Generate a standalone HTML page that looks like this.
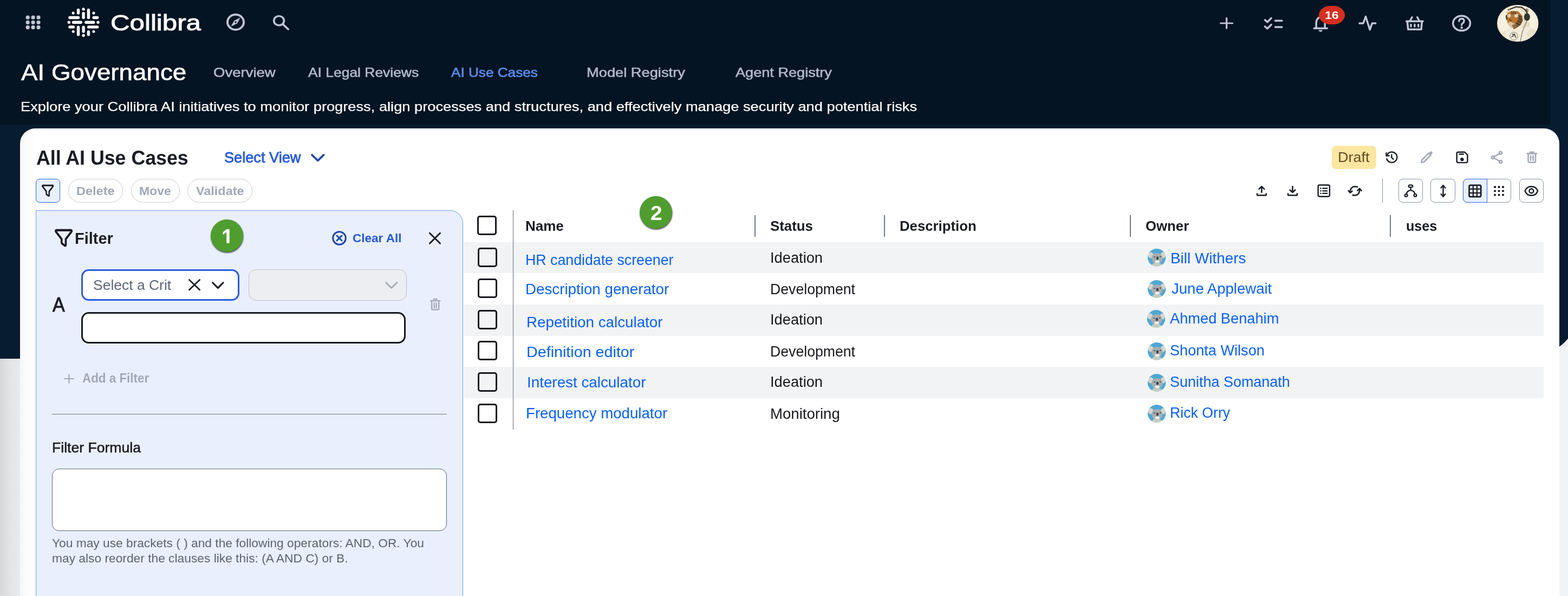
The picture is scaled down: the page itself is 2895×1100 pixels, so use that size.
<!DOCTYPE html>
<html lang="en"><head><meta charset="utf-8"><title>AI Governance - All AI Use Cases</title>
<style>
html,body{margin:0;padding:0;}
body{width:2895px;height:1100px;overflow:hidden;background:#071c30;font-family:"Liberation Sans",sans-serif;}
#root{position:relative;width:2895px;height:1100px;overflow:hidden;}
#root div,#root svg,#root span{position:absolute;box-sizing:border-box;}
#root svg{overflow:visible;}
.t{white-space:nowrap;transform-origin:0 0;display:block;}

</style></head>
<body>
<div id="root">
<div style="left:0.00px;top:0.00px;width:2863.00px;height:230.00px;background:#051422;"></div>
<div style="left:0.00px;top:662.00px;width:37.00px;height:438.00px;background:linear-gradient(90deg,#d6d7d8 0%,#e3e4e5 50%,#e9eaeb 100%);"></div>
<svg style="left:2879.00px;top:610.00px;width:16.00px;height:490.00px;" viewBox="0 0 16 490" preserveAspectRatio="none"><path d="M0 30 Q9 23.5 16 15 L16 490 L0 490 Z" fill="#f2f3f5"/></svg>
<div style="left:37.00px;top:237.00px;width:2842.00px;height:900.00px;background:linear-gradient(90deg,#f7f7f7 0px,#fbfbfb 12px,#fff 30px);border-radius:28px 28px 0 0;"></div>
<svg style="left:0.00px;top:0.00px;width:100.00px;height:85.00px;" viewBox="0 0 100 85" preserveAspectRatio="none"><circle cx="51.2" cy="32.2" r="3.6" fill="#c0c6d2"/><circle cx="51.2" cy="41.3" r="3.6" fill="#c0c6d2"/><circle cx="51.2" cy="50.4" r="3.6" fill="#c0c6d2"/><circle cx="61.1" cy="32.2" r="3.6" fill="#c0c6d2"/><circle cx="61.1" cy="41.3" r="3.6" fill="#c0c6d2"/><circle cx="61.1" cy="50.4" r="3.6" fill="#c0c6d2"/><circle cx="71.0" cy="32.2" r="3.6" fill="#c0c6d2"/><circle cx="71.0" cy="41.3" r="3.6" fill="#c0c6d2"/><circle cx="71.0" cy="50.4" r="3.6" fill="#c0c6d2"/></svg>
<svg style="left:110.00px;top:0.00px;width:100.00px;height:85.00px;" viewBox="0 0 1152 979" preserveAspectRatio="none"><rect x="367.0" y="182" width="62" height="126" rx="31.0" fill="#fff"/><rect x="477.0" y="252" width="62" height="153" rx="31.0" fill="#fff"/><rect x="584.0" y="182" width="62" height="223" rx="31.0" fill="#fff"/><rect x="367.0" y="547" width="62" height="218" rx="31.0" fill="#fff"/><rect x="477.0" y="547" width="62" height="153" rx="31.0" fill="#fff"/><rect x="584.0" y="645" width="62" height="120" rx="31.0" fill="#fff"/><rect x="187" y="344.0" width="241" height="62" rx="31.0" fill="#fff"/><rect x="697" y="344.0" width="136" height="62" rx="31.0" fill="#fff"/><rect x="262" y="444.0" width="221" height="62" rx="31.0" fill="#fff"/><rect x="532" y="444.0" width="221" height="62" rx="31.0" fill="#fff"/><rect x="187" y="544.0" width="136" height="62" rx="31.0" fill="#fff"/><rect x="587" y="544.0" width="246" height="62" rx="31.0" fill="#fff"/><circle cx="508" cy="195" r="31" fill="#fff"/><circle cx="508" cy="755" r="31" fill="#fff"/><circle cx="200" cy="475" r="31" fill="#fff"/><circle cx="818" cy="475" r="31" fill="#fff"/><circle cx="290" cy="278" r="29" fill="#fff"/><circle cx="725" cy="278" r="29" fill="#fff"/><circle cx="290" cy="672" r="29" fill="#fff"/><circle cx="725" cy="672" r="29" fill="#fff"/></svg>
<span class="t" style="left:203.56px;top:22.40px;font-size:41.28px;line-height:41.28px;color:#fff;transform:scaleX(1.1932);-webkit-text-stroke:0.9px #fff;">Collibra</span>
<svg style="left:418.00px;top:25.30px;width:34.00px;height:31.70px;" viewBox="2 2 20 20" preserveAspectRatio="none"><circle cx="12" cy="12" r="8.85" fill="none" stroke="#c0c7d6" stroke-width="2.3"/><path d="M17.2 6.8 L13.6 13.6 L6.8 17.2 L10.4 10.4 Z" fill="#c0c7d6"/><circle cx="12" cy="12" r="1" fill="#051422"/></svg>
<svg style="left:503.60px;top:27.60px;width:29.90px;height:27.50px;" viewBox="2.9 2.9 19.2 19.2" preserveAspectRatio="none"><circle cx="10" cy="10" r="6" fill="none" stroke="#c0c7d6" stroke-width="2.3"/><path d="M14.6 14.6 L21 21" stroke="#c0c7d6" stroke-width="2.4" stroke-linecap="round"/></svg>
<svg style="left:2251.80px;top:32.00px;width:25.30px;height:21.80px;" viewBox="0 0 24 24" preserveAspectRatio="none"><path d="M12 1.6V22.4M1.6 12H22.4" stroke="#c0c7d6" stroke-width="3.0" stroke-linecap="round" fill="none"/></svg>
<svg style="left:2230.00px;top:0.00px;width:330.00px;height:90.00px;" viewBox="0 0 2576 703" preserveAspectRatio="none"><g fill="none" stroke="#c0c7d6" stroke-width="27" stroke-linecap="round" stroke-linejoin="round"><path d="M824 288 L858 318 L914 262"/><path d="M824 382 L858 412 L914 356"/><path d="M972 298 H1068"/><path d="M972 390 H1068"/><path d="M1562 400 V330 A63 82 0 0 1 1688 330 V400"/><path d="M1532 408 H1720"/><path d="M1600 438 Q1625 470 1650 438 Z" stroke-width="8" fill="#c0c7d6"/><path d="M2185 336 H2240 L2275 238 L2335 428 L2368 336 H2418"/></g></svg>
<div style="left:2434.90px;top:11.20px;width:48.60px;height:33.70px;background:#d52f20;border-radius:21px/16.85px;"></div>
<span class="t" style="left:2445.88px;top:17.60px;font-size:20.64px;line-height:20.64px;color:#fff;transform:scaleX(1.1178);font-weight:700;">16</span>
<svg style="left:2560.00px;top:0.00px;width:335.00px;height:90.00px;" viewBox="0 0 2576 692" preserveAspectRatio="none"><g fill="none" stroke="#c0c7d6" stroke-width="27" stroke-linecap="round" stroke-linejoin="round"><path d="M282 302 H516"/><path d="M296 310 L306 418 H492 L502 310"/><path d="M332 298 L362 244"/><path d="M466 298 L436 244"/><path d="M346 348 V376M399 348 V376M452 348 V376" stroke-width="26"/><ellipse cx="1065.5" cy="330" rx="122" ry="105"/><path d="M1030 300 Q1032 265 1066 265 Q1100 265 1100 296 Q1100 318 1080 330 Q1066 338 1066 356" stroke-width="26"/></g><circle cx="1066" cy="392" r="17" fill="#c0c7d6"/></svg>
<svg style="left:2764.40px;top:8.80px;width:76.60px;height:67.80px;" viewBox="0 0 100 100" preserveAspectRatio="none"><defs><clipPath id="avc"><ellipse cx="50" cy="50" rx="50" ry="50"/></clipPath><radialGradient id="avg" cx="0.5" cy="0.5" r="0.55"><stop offset="0.7" stop-color="#f6f1e0"/><stop offset="1" stop-color="#efe7cf"/></radialGradient></defs><filter id="avb"><feGaussianBlur stdDeviation="0.9"/></filter><g clip-path="url(#avc)"><rect width="100" height="100" fill="url(#avg)"/><g filter="url(#avb)"><path d="M9.8 101.3 L13.2 75.3 L27.0 63.6 L40.8 68.8 L54.6 64.9 L76.4 57.1 L91.4 67.5 L96.0 101.3 Z" fill="#f1ebd9"/><path d="M13.2 75.3 L19.0 70.1 L21.3 88.3 L19.0 101.3 L9.8 101.3 Z" fill="#e6dcc0" opacity=".8"/><path d="M73.0 72.7 L84.5 64.9 L93.7 70.1 L94.8 85.7 L82.2 98.7 L73.0 90.9 Z" fill="#e8dfc6" opacity=".8"/><path d="M21.3 20.8 L35.1 9.1 L54.6 7.8 L66.1 19.5 L73.0 42.9 L81.0 49.4 L77.6 57.1 L54.6 64.9 L40.8 68.8 L27.0 61.0 L20.1 44.2 Z" fill="#f3eddb"/><path d="M61.5 29.9 L68.4 44.2 L77.6 48.1 L78.7 57.1 L56.9 64.9 L63.8 49.4 Z" fill="#e3d9bd" opacity=".9"/><path d="M25.3 11.7 L29.9 11.0 L31.6 14.9 L27.0 17.5 Z" fill="#2c2418"/><path d="M66.1 13.0 L71.8 9.1 L76.4 13.0 L74.7 20.8 L68.4 19.5 Z" fill="#a08a68"/><path d="M24.7 22.1 L35.1 16.2 L51.1 17.5 L60.3 28.6 L62.1 42.9 L56.9 54.5 L48.9 61.7 L40.8 66.9 L31.6 59.7 L25.3 49.4 L23.0 35.1 Z" fill="#b9752f"/><path d="M50.0 26.0 L60.3 29.9 L62.1 42.9 L56.9 54.5 L48.9 61.0 L45.4 49.4 L52.3 39.0 Z" fill="#5b4a33" opacity=".75"/><path d="M25.3 26.0 L31.6 24.0 L33.9 31.2 L28.2 35.1 L24.7 32.5 Z" fill="#d9cfb4"/><path d="M42.0 26.0 L50.0 24.7 L52.3 31.2 L45.4 35.1 L41.4 31.8 Z" fill="#ddd3b8"/><path d="M25.9 48.1 L33.9 46.1 L43.1 51.9 L45.4 59.7 L40.8 66.2 L31.6 59.7 Z" fill="#d9c5a0"/><path d="M35.1 54.5 L45.4 51.9 L50.0 59.7 L40.8 66.5 Z" fill="#7a5a36" opacity=".8"/><path d="M20.7 29.9 L23.8 26.0 L24.7 39.0 L22.4 41.6 Z" fill="#3a3326"/><path d="M35.1 18.2 L36.8 26.0 M40.8 17.1 L40.2 24.7 M45.4 18.2 L43.7 25.3 M51.1 29.9 L58.0 32.5 M50.0 36.4 L60.3 40.3 M48.9 42.9 L59.2 48.1 M45.4 49.4 L54.6 54.5 M29.3 39.0 L35.1 44.2" fill="none" stroke="#46341f" stroke-width="2.4" opacity=".85"/><path d="M21.3 20.8 L35.1 9.1 L54.6 7.8 L66.1 19.5 L73.0 42.9" fill="none" stroke="#d8cdaf" stroke-width="2.5"/><path d="M30.5 12.3 L45.4 5.2 L59.2 6.5 L69.5 14.9 L73.0 24.7" fill="none" stroke="#3b382f" stroke-width="3.2"/><ellipse cx="72.2" cy="33.1" rx="7.2" ry="10.6" fill="#36352e"/><path d="M71.3 44.2 L66.1 59.7 L60.3 75.3 L56.3 100.0" fill="none" stroke="#5a574c" stroke-width="1.3"/><ellipse cx="40.6" cy="85.1" rx="9.6" ry="10.8" fill="none" stroke="#6a685e" stroke-width="1.1"/><path d="M35.1 87.7 L42.0 79.9 L45.4 89.6 M36.2 79.9 L42.5 79.5" fill="none" stroke="#3f3e38" stroke-width="2.2"/></g></g></svg>
<span class="t" style="left:38.70px;top:111.90px;font-size:42.73px;line-height:42.73px;color:#fff;transform:scaleX(1.0714);-webkit-text-stroke:0.6px #fff;">AI Governance</span>
<span class="t" style="left:394.47px;top:121.90px;font-size:24.27px;line-height:24.27px;color:#b0b8c9;transform:scaleX(1.1342);-webkit-text-stroke:0.6px #b0b8c9;">Overview</span>
<span class="t" style="left:569.30px;top:121.90px;font-size:24.27px;line-height:24.27px;color:#b0b8c9;transform:scaleX(1.0889);-webkit-text-stroke:0.6px #b0b8c9;">AI Legal Reviews</span>
<span class="t" style="left:833.30px;top:121.90px;font-size:24.27px;line-height:24.27px;color:#5b8ff2;transform:scaleX(1.0775);-webkit-text-stroke:0.6px #5b8ff2;">AI Use Cases</span>
<span class="t" style="left:1083.18px;top:121.90px;font-size:24.27px;line-height:24.27px;color:#b0b8c9;transform:scaleX(1.1237);-webkit-text-stroke:0.6px #b0b8c9;">Model Registry</span>
<span class="t" style="left:1357.70px;top:121.90px;font-size:24.27px;line-height:24.27px;color:#b0b8c9;transform:scaleX(1.1174);-webkit-text-stroke:0.6px #b0b8c9;">Agent Registry</span>
<span class="t" style="left:37.90px;top:185.40px;font-size:24.13px;line-height:24.13px;color:#fff;transform:scaleX(1.1296);-webkit-text-stroke:0.25px #fff;">Explore your Collibra AI initiatives to monitor progress, align processes and structures, and effectively manage security and potential risks</span>
<span class="t" style="left:67.10px;top:272.90px;font-size:37.79px;line-height:37.79px;color:#1a1c23;transform:scaleX(0.9459);font-weight:700;">All AI Use Cases</span>
<span class="t" style="left:414.04px;top:278.00px;font-size:27.03px;line-height:27.03px;color:#2a5ce0;transform:scaleX(1.0054);-webkit-text-stroke:0.9px #2a5ce0;">Select View</span>
<svg style="left:573.50px;top:284.20px;width:25.60px;height:14.40px;" viewBox="0 0 25.6 14.4" preserveAspectRatio="none"><path d="M1.9 1.9 L12.8 12.4 L23.7 1.9" fill="none" stroke="#2049ab" stroke-width="3.6" stroke-linecap="round" stroke-linejoin="round"/></svg>
<div style="left:2459.20px;top:268.80px;width:81.80px;height:43.10px;background:#fbe7a1;border-radius:8px;"></div>
<span class="t" style="left:2470.30px;top:278.00px;font-size:25.73px;line-height:25.73px;color:#6b4a21;transform:scaleX(1.0506);">Draft</span>
<div style="left:2582.00px;top:330.00px;width:45.00px;height:44.00px;border:1px solid #8a93a8;border-radius:8px;background:#fff;"></div>
<div style="left:2641.00px;top:330.00px;width:45.70px;height:44.00px;border:1px solid #8a93a8;border-radius:8px;background:#fff;"></div>
<div style="left:2701.00px;top:330.00px;width:89.00px;height:44.00px;border:1px solid #8a93a8;border-radius:8px;background:#fff;"></div>
<div style="left:2701.00px;top:330.00px;width:45.30px;height:44.00px;border:1.3px solid #2f63e6;border-radius:8px 0 0 8px;background:#e8effd;"></div>
<div style="left:2805.00px;top:330.00px;width:45.00px;height:44.00px;border:1px solid #8a93a8;border-radius:8px;background:#fff;"></div>
<svg style="left:2415.00px;top:220.00px;width:480.00px;height:180.00px;" viewBox="0 0 2576 966" preserveAspectRatio="none"><g fill="none" stroke="#1a1c23" stroke-width="13" stroke-linecap="round" stroke-linejoin="round"><path d="M784 352 A52 52 0 1 1 780 392"/><path d="M776 334 V362 H804"/><path d="M828 352 V380 L846 396"/><path d="M1474 340 Q1474 326 1488 326 H1552 L1580 354 V416 Q1580 430 1566 430 H1488 Q1474 430 1474 416 Z"/><path d="M1500 346 H1540"/><rect x="100" y="652" width="114" height="114" rx="14"/><path d="M146 685 H190M146 710 H190M146 735 H190" stroke-width="12"/><ellipse cx="1017" cy="663" rx="21" ry="12" stroke-width="12"/><circle cx="972" cy="754" r="13" stroke-width="12"/><circle cx="1062" cy="754" r="13" stroke-width="12"/><path d="M1017 677 V702 M975 739 Q980 716 1000 708 Q1010 704 1017 702 Q1024 704 1034 708 Q1054 716 1059 739" stroke-width="12"/><path d="M1339 656 V766"/><path d="M1318 680 L1339 656 L1360 680"/><path d="M1318 742 L1339 766 L1360 742"/><rect x="1597" y="654" width="116" height="114" rx="12" stroke-width="15"/><path d="M1636 656 V766 M1674 656 V766 M1599 692 H1711 M1599 730 H1711" stroke-width="12"/><path d="M2150 711 C2172 652 2254 652 2276 711 C2254 770 2172 770 2150 711 Z"/><circle cx="2213" cy="711" r="21"/></g><g fill="#1a1c23"><circle cx="1526" cy="398" r="17"/><circle cx="126" cy="685" r="7"/><circle cx="126" cy="710" r="7"/><circle cx="126" cy="735" r="7"/><circle cx="1852" cy="672" r="11.3"/><circle cx="1852" cy="711" r="11.3"/><circle cx="1852" cy="750" r="11.3"/><circle cx="1892" cy="672" r="11.3"/><circle cx="1892" cy="711" r="11.3"/><circle cx="1892" cy="750" r="11.3"/><circle cx="1932" cy="672" r="11.3"/><circle cx="1932" cy="711" r="11.3"/><circle cx="1932" cy="750" r="11.3"/></g><g fill="none" stroke="#a3aab8" stroke-width="14" stroke-linecap="round" stroke-linejoin="round"><path d="M1124 428 L1128 404 L1196 336 L1216 356 L1148 424 Z"/><circle cx="1908" cy="334" r="13"/><circle cx="1908" cy="422" r="13"/><circle cx="1832" cy="378" r="13"/><path d="M1844 371 L1896 341 M1844 385 L1896 415"/><path d="M2172 340 H2264"/><path d="M2200 326 H2236"/><path d="M2182 344 V416 Q2182 428 2194 428 H2242 Q2254 428 2254 416 V344"/><path d="M2206 362 V408 M2230 362 V408"/></g><path d="M1200 332 L1212 320 Q1222 314 1230 324 Q1238 334 1230 342 L1220 352 Z" fill="#a3aab8"/></svg>
<svg style="left:2290.00px;top:320.00px;width:300.00px;height:70.00px;" viewBox="0 0 2576 601" preserveAspectRatio="none"><g fill="none" stroke="#1a1c23" stroke-width="22" stroke-linecap="round" stroke-linejoin="round"><path d="M338 212 V300"/><path d="M296 248 L338 208 L380 248"/><path d="M266 322 V334 Q266 348 280 348 H396 Q410 348 410 334 V322"/><path d="M828 208 V296"/><path d="M786 262 L828 302 L870 262"/><path d="M756 322 V334 Q756 348 770 348 H886 Q900 348 900 334 V322"/><path d="M1856 214 Q1790 196 1756 240 Q1738 266 1742 302"/><path d="M1714 274 L1742 306 L1774 282"/><path d="M1782 344 Q1846 360 1876 318 Q1894 290 1890 248"/><path d="M1858 272 L1890 240 L1920 274"/></g></svg>
<div style="left:2552.00px;top:330.00px;width:1.20px;height:44.00px;background:#7d879d;"></div>
<div style="left:66.10px;top:330.00px;width:45.00px;height:44.00px;border:1.3px solid #2f63e6;border-radius:7px;background:#e8effd;"></div>
<svg style="left:77.20px;top:341.10px;width:22.30px;height:21.80px;" viewBox="0.9 2.9 22.2 19" preserveAspectRatio="none"><path d="M3 4 H21 Q22.4 4.2 21.6 5.6 L14.6 13.6 V20 Q14.4 21.3 13.2 20.7 L10 18.6 Q9.4 18.2 9.4 17.4 V13.6 L2.4 5.6 Q1.6 4.2 3 4 Z" fill="none" stroke="#1a1c23" stroke-width="2.5" stroke-linejoin="round"/></svg>
<div style="left:126.00px;top:330.00px;width:101.00px;height:44.00px;border:1px solid #c9ccd3;border-radius:22px;background:#fff;"></div>
<span class="t" style="left:140.85px;top:341.90px;font-size:22.38px;line-height:22.38px;color:#a1a8b6;transform:scaleX(1.0515);font-weight:700;">Delete</span>
<div style="left:241.90px;top:330.00px;width:89.80px;height:44.00px;border:1px solid #c9ccd3;border-radius:22px;background:#fff;"></div>
<span class="t" style="left:257.27px;top:341.90px;font-size:22.38px;line-height:22.38px;color:#a1a8b6;transform:scaleX(1.0260);font-weight:700;">Move</span>
<div style="left:346.00px;top:330.00px;width:119.80px;height:44.00px;border:1px solid #c9ccd3;border-radius:22px;background:#fff;"></div>
<span class="t" style="left:362.00px;top:341.90px;font-size:22.38px;line-height:22.38px;color:#a1a8b6;transform:scaleX(1.0460);font-weight:700;">Validate</span>
<div style="left:66.00px;top:388.00px;width:789.30px;height:760.00px;background:#e9effd;border:1.3px solid #7099f2;border-radius:0 24px 0 0;"></div>
<svg style="left:100.80px;top:423.10px;width:33.20px;height:32.20px;" viewBox="0.9 2.9 22.2 19" preserveAspectRatio="none"><path d="M3 4 H21 Q22.4 4.2 21.6 5.6 L14.6 13.6 V20 Q14.4 21.3 13.2 20.7 L10 18.6 Q9.4 18.2 9.4 17.4 V13.6 L2.4 5.6 Q1.6 4.2 3 4 Z" fill="none" stroke="#1a1c23" stroke-width="2.4" stroke-linejoin="round"/></svg>
<span class="t" style="left:138.48px;top:424.70px;font-size:30.23px;line-height:30.23px;color:#1a1c23;transform:scaleX(0.9581);font-weight:700;">Filter</span>
<svg style="left:612.70px;top:425.50px;width:27.00px;height:27.00px;" viewBox="0 0 24 24" preserveAspectRatio="none"><circle cx="12" cy="12" r="10.5" fill="none" stroke="#1f48a9" stroke-width="2.7"/><path d="M8 8 L16 16 M16 8 L8 16" stroke="#1f48a9" stroke-width="2.7" stroke-linecap="round"/></svg>
<span class="t" style="left:650.60px;top:427.90px;font-size:22.97px;line-height:22.97px;color:#2459d8;transform:scaleX(0.9788);font-weight:700;">Clear All</span>
<svg style="left:792.40px;top:428.60px;width:21.90px;height:21.60px;" viewBox="0 0 24 24" preserveAspectRatio="none"><path d="M1.5 1.5 L22.5 22.5 M22.5 1.5 L1.5 22.5" stroke="#1a1c23" stroke-width="3.2" stroke-linecap="round"/></svg>
<span class="t" style="left:97.45px;top:544.10px;font-size:37.21px;line-height:37.21px;color:#1a1c23;transform:scaleX(0.9160);-webkit-text-stroke:0.9px #1a1c23;">A</span>
<div style="left:150.10px;top:496.70px;width:292.00px;height:58.20px;border:3.2px solid #2a5be0;border-radius:14px;background:#fff;"></div>
<span class="t" style="left:171.59px;top:512.90px;font-size:26.16px;line-height:26.16px;color:#5d6674;transform:scaleX(1.0120);">Select a Crit</span>
<svg style="left:348.20px;top:515.40px;width:22.10px;height:21.40px;" viewBox="0 0 24 24" preserveAspectRatio="none"><path d="M1.5 1.5 L22.5 22.5 M22.5 1.5 L1.5 22.5" stroke="#1a1c23" stroke-width="3" stroke-linecap="round"/></svg>
<svg style="left:391.00px;top:519.80px;width:22.70px;height:13.30px;" viewBox="0 0 24 13.4" preserveAspectRatio="none"><path d="M1.7 1.7 L12 11.6 L22.3 1.7" fill="none" stroke="#1a1c23" stroke-width="3.2" stroke-linecap="round" stroke-linejoin="round"/></svg>
<div style="left:459.20px;top:496.90px;width:291.50px;height:57.80px;border:1.1px solid #bcc0c7;border-radius:14px;background:#eceef2;"></div>
<svg style="left:710.80px;top:519.50px;width:23.50px;height:13.30px;" viewBox="0 0 24 13.4" preserveAspectRatio="none"><path d="M1.7 1.7 L12 11.6 L22.3 1.7" fill="none" stroke="#a7aeb6" stroke-width="3" stroke-linecap="round" stroke-linejoin="round"/></svg>
<svg style="left:794.00px;top:551.30px;width:19.40px;height:21.70px;" viewBox="0 0 20 22" preserveAspectRatio="none"><g fill="none" stroke="#a3aab8" stroke-width="2.5" stroke-linecap="round" stroke-linejoin="round"><path d="M1.2 4.2 H18.8"/><path d="M7 1.3 H13"/><path d="M3.2 5 V18.4 Q3.2 20.8 5.6 20.8 H14.4 Q16.8 20.8 16.8 18.4 V5"/><path d="M8 8.5 V17 M12 8.5 V17"/></g></svg>
<div style="left:150.10px;top:575.90px;width:598.80px;height:57.70px;border:3.2px solid #16181d;border-radius:14px;background:#fff;"></div>
<svg style="left:117.80px;top:690.20px;width:18.90px;height:18.20px;" viewBox="0 0 24 24" preserveAspectRatio="none"><path d="M12 1.5V22.5M1.5 12H22.5" stroke="#a1a8b6" stroke-width="2.6" stroke-linecap="round"/></svg>
<span class="t" style="left:151.80px;top:687.30px;font-size:23.11px;line-height:23.11px;color:#a1a8b6;transform:scaleX(0.9692);font-weight:700;">Add a Filter</span>
<div style="left:96.00px;top:763.90px;width:728.80px;height:1.20px;background:#6c7893;"></div>
<span class="t" style="left:95.72px;top:813.00px;font-size:26.16px;line-height:26.16px;color:#16181d;transform:scaleX(1.0165);-webkit-text-stroke:0.5px #16181d;">Filter Formula</span>
<div style="left:96.20px;top:865.00px;width:728.60px;height:114.70px;border:1.3px solid #5c657a;border-radius:13px;background:#fff;"></div>
<span class="t" style="left:96.20px;top:992.90px;font-size:21.51px;line-height:21.51px;color:#5c6370;transform:scaleX(1.0579);">You may use brackets ( ) and the following operators: AND, OR. You</span>
<span class="t" style="left:95.54px;top:1020.90px;font-size:21.51px;line-height:21.51px;color:#5c6370;transform:scaleX(1.0589);">may also reorder the clauses like this: (A AND C) or B.</span>
<div style="left:856.00px;top:447.10px;width:1994.00px;height:57.30px;background:#f2f3f5;"></div>
<div style="left:856.00px;top:562.20px;width:1994.00px;height:57.40px;background:#f2f3f5;"></div>
<div style="left:856.00px;top:677.00px;width:1994.00px;height:57.50px;background:#f2f3f5;"></div>
<div style="left:946.80px;top:388.00px;width:1.20px;height:405.00px;background:#5f6780;"></div>
<div style="left:1393.30px;top:397.00px;width:2.00px;height:39.60px;background:#6c7893;"></div>
<div style="left:1632.20px;top:397.00px;width:2.00px;height:39.60px;background:#6c7893;"></div>
<div style="left:2086.10px;top:397.00px;width:2.00px;height:39.60px;background:#6c7893;"></div>
<div style="left:2566.20px;top:397.00px;width:2.00px;height:39.60px;background:#6c7893;"></div>
<div style="left:881.30px;top:398.20px;width:36.10px;height:36.20px;border:3.5px solid #16181d;border-radius:4.8px;"></div>
<span class="t" style="left:969.61px;top:404.10px;font-size:26.31px;line-height:26.31px;color:#1a1c23;transform:scaleX(0.9886);font-weight:700;">Name</span>
<span class="t" style="left:1422.20px;top:404.10px;font-size:26.31px;line-height:26.31px;color:#1a1c23;transform:scaleX(0.9819);font-weight:700;">Status</span>
<span class="t" style="left:1660.82px;top:404.10px;font-size:26.31px;line-height:26.31px;color:#1a1c23;transform:scaleX(0.9797);font-weight:700;">Description</span>
<span class="t" style="left:2115.22px;top:404.10px;font-size:26.31px;line-height:26.31px;color:#1a1c23;transform:scaleX(0.9802);font-weight:700;">Owner</span>
<span class="t" style="left:2595.74px;top:404.10px;font-size:26.31px;line-height:26.31px;color:#1a1c23;transform:scaleX(0.9569);font-weight:700;">uses</span>
<div style="left:882.40px;top:456.60px;width:36.00px;height:36.10px;border:3.5px solid #16181d;border-radius:4.8px;"></div>
<span class="t" style="left:969.81px;top:466.80px;font-size:26.89px;line-height:26.89px;color:#0a60ff;transform:scaleX(0.9948);">HR candidate screener</span>
<span class="t" style="left:1422.16px;top:463.20px;font-size:26.74px;line-height:26.74px;color:#17181c;transform:scaleX(1.0199);">Ideation</span>
<svg style="left:2118.80px;top:458.90px;width:33.30px;height:32.90px;" viewBox="0 0 100 100" preserveAspectRatio="none"><defs><clipPath id="kc0"><circle cx="50" cy="50" r="50"/></clipPath><filter id="kb0"><feGaussianBlur stdDeviation="1.6"/></filter></defs><g clip-path="url(#kc0)"><g filter="url(#kb0)"><rect x="-10" y="-10" width="120" height="120" fill="#4fa8d3"/><ellipse cx="17" cy="36" rx="15" ry="17" fill="#d3d6d0"/><ellipse cx="85" cy="36" rx="14" ry="17" fill="#d3d6d0"/><ellipse cx="52" cy="54" rx="31" ry="30" fill="#a9aeae"/><path d="M22 100 Q26 76 50 78 Q76 76 82 100 Z" fill="#c3cdc2"/><ellipse cx="53" cy="72" rx="13" ry="7" fill="#eef0ee"/><ellipse cx="54" cy="53" rx="6.5" ry="9" fill="#3b4049"/><ellipse cx="38" cy="46" rx="4.5" ry="3" fill="#3b4049"/><ellipse cx="70" cy="45" rx="4.5" ry="3" fill="#3b4049"/></g></g></svg>
<span class="t" style="left:2160.75px;top:462.60px;font-size:27.18px;line-height:27.18px;color:#0a60ff;transform:scaleX(1.0271);">Bill Withers</span>
<div style="left:882.40px;top:514.20px;width:36.00px;height:36.10px;border:3.5px solid #16181d;border-radius:4.8px;"></div>
<span class="t" style="left:969.74px;top:520.90px;font-size:26.89px;line-height:26.89px;color:#0a60ff;transform:scaleX(1.0322);">Description generator</span>
<span class="t" style="left:1422.21px;top:520.60px;font-size:26.74px;line-height:26.74px;color:#17181c;transform:scaleX(0.9968);">Development</span>
<svg style="left:2118.80px;top:516.80px;width:33.30px;height:32.90px;" viewBox="0 0 100 100" preserveAspectRatio="none"><defs><clipPath id="kc1"><circle cx="50" cy="50" r="50"/></clipPath><filter id="kb1"><feGaussianBlur stdDeviation="1.6"/></filter></defs><g clip-path="url(#kc1)"><g filter="url(#kb1)"><rect x="-10" y="-10" width="120" height="120" fill="#4fa8d3"/><ellipse cx="17" cy="36" rx="15" ry="17" fill="#d3d6d0"/><ellipse cx="85" cy="36" rx="14" ry="17" fill="#d3d6d0"/><ellipse cx="52" cy="54" rx="31" ry="30" fill="#a9aeae"/><path d="M22 100 Q26 76 50 78 Q76 76 82 100 Z" fill="#c3cdc2"/><ellipse cx="53" cy="72" rx="13" ry="7" fill="#eef0ee"/><ellipse cx="54" cy="53" rx="6.5" ry="9" fill="#3b4049"/><ellipse cx="38" cy="46" rx="4.5" ry="3" fill="#3b4049"/><ellipse cx="70" cy="45" rx="4.5" ry="3" fill="#3b4049"/></g></g></svg>
<span class="t" style="left:2162.60px;top:518.80px;font-size:27.18px;line-height:27.18px;color:#0a60ff;transform:scaleX(1.0133);">June Applewait</span>
<div style="left:882.40px;top:571.80px;width:36.00px;height:36.10px;border:3.5px solid #16181d;border-radius:4.8px;"></div>
<span class="t" style="left:972.33px;top:582.20px;font-size:26.89px;line-height:26.89px;color:#0a60ff;transform:scaleX(1.0329);">Repetition calculator</span>
<span class="t" style="left:1422.16px;top:577.10px;font-size:26.74px;line-height:26.74px;color:#17181c;transform:scaleX(1.0199);">Ideation</span>
<svg style="left:2117.60px;top:572.00px;width:33.30px;height:32.90px;" viewBox="0 0 100 100" preserveAspectRatio="none"><defs><clipPath id="kc2"><circle cx="50" cy="50" r="50"/></clipPath><filter id="kb2"><feGaussianBlur stdDeviation="1.6"/></filter></defs><g clip-path="url(#kc2)"><g filter="url(#kb2)"><rect x="-10" y="-10" width="120" height="120" fill="#4fa8d3"/><ellipse cx="17" cy="36" rx="15" ry="17" fill="#d3d6d0"/><ellipse cx="85" cy="36" rx="14" ry="17" fill="#d3d6d0"/><ellipse cx="52" cy="54" rx="31" ry="30" fill="#a9aeae"/><path d="M22 100 Q26 76 50 78 Q76 76 82 100 Z" fill="#c3cdc2"/><ellipse cx="53" cy="72" rx="13" ry="7" fill="#eef0ee"/><ellipse cx="54" cy="53" rx="6.5" ry="9" fill="#3b4049"/><ellipse cx="38" cy="46" rx="4.5" ry="3" fill="#3b4049"/><ellipse cx="70" cy="45" rx="4.5" ry="3" fill="#3b4049"/></g></g></svg>
<span class="t" style="left:2159.70px;top:573.50px;font-size:27.18px;line-height:27.18px;color:#0a60ff;transform:scaleX(1.0023);">Ahmed Benahim</span>
<div style="left:882.40px;top:629.40px;width:36.00px;height:36.10px;border:3.5px solid #16181d;border-radius:4.8px;"></div>
<span class="t" style="left:972.26px;top:637.00px;font-size:26.89px;line-height:26.89px;color:#0a60ff;transform:scaleX(1.0677);">Definition editor</span>
<span class="t" style="left:1422.21px;top:635.60px;font-size:26.74px;line-height:26.74px;color:#17181c;transform:scaleX(0.9968);">Development</span>
<svg style="left:2118.80px;top:632.00px;width:33.30px;height:32.90px;" viewBox="0 0 100 100" preserveAspectRatio="none"><defs><clipPath id="kc3"><circle cx="50" cy="50" r="50"/></clipPath><filter id="kb3"><feGaussianBlur stdDeviation="1.6"/></filter></defs><g clip-path="url(#kc3)"><g filter="url(#kb3)"><rect x="-10" y="-10" width="120" height="120" fill="#4fa8d3"/><ellipse cx="17" cy="36" rx="15" ry="17" fill="#d3d6d0"/><ellipse cx="85" cy="36" rx="14" ry="17" fill="#d3d6d0"/><ellipse cx="52" cy="54" rx="31" ry="30" fill="#a9aeae"/><path d="M22 100 Q26 76 50 78 Q76 76 82 100 Z" fill="#c3cdc2"/><ellipse cx="53" cy="72" rx="13" ry="7" fill="#eef0ee"/><ellipse cx="54" cy="53" rx="6.5" ry="9" fill="#3b4049"/><ellipse cx="38" cy="46" rx="4.5" ry="3" fill="#3b4049"/><ellipse cx="70" cy="45" rx="4.5" ry="3" fill="#3b4049"/></g></g></svg>
<span class="t" style="left:2159.50px;top:632.70px;font-size:27.18px;line-height:27.18px;color:#0a60ff;transform:scaleX(0.9978);">Shonta Wilson</span>
<div style="left:882.40px;top:687.00px;width:36.00px;height:36.10px;border:3.5px solid #16181d;border-radius:4.8px;"></div>
<span class="t" style="left:972.73px;top:693.30px;font-size:26.89px;line-height:26.89px;color:#0a60ff;transform:scaleX(1.0344);">Interest calculator</span>
<span class="t" style="left:1422.16px;top:691.90px;font-size:26.74px;line-height:26.74px;color:#17181c;transform:scaleX(1.0199);">Ideation</span>
<svg style="left:2118.80px;top:689.70px;width:33.30px;height:32.90px;" viewBox="0 0 100 100" preserveAspectRatio="none"><defs><clipPath id="kc4"><circle cx="50" cy="50" r="50"/></clipPath><filter id="kb4"><feGaussianBlur stdDeviation="1.6"/></filter></defs><g clip-path="url(#kc4)"><g filter="url(#kb4)"><rect x="-10" y="-10" width="120" height="120" fill="#4fa8d3"/><ellipse cx="17" cy="36" rx="15" ry="17" fill="#d3d6d0"/><ellipse cx="85" cy="36" rx="14" ry="17" fill="#d3d6d0"/><ellipse cx="52" cy="54" rx="31" ry="30" fill="#a9aeae"/><path d="M22 100 Q26 76 50 78 Q76 76 82 100 Z" fill="#c3cdc2"/><ellipse cx="53" cy="72" rx="13" ry="7" fill="#eef0ee"/><ellipse cx="54" cy="53" rx="6.5" ry="9" fill="#3b4049"/><ellipse cx="38" cy="46" rx="4.5" ry="3" fill="#3b4049"/><ellipse cx="70" cy="45" rx="4.5" ry="3" fill="#3b4049"/></g></g></svg>
<span class="t" style="left:2159.51px;top:691.20px;font-size:27.18px;line-height:27.18px;color:#0a60ff;transform:scaleX(0.9921);">Sunitha Somanath</span>
<div style="left:882.40px;top:744.60px;width:36.00px;height:36.10px;border:3.5px solid #16181d;border-radius:4.8px;"></div>
<span class="t" style="left:971.34px;top:749.90px;font-size:26.89px;line-height:26.89px;color:#0a60ff;transform:scaleX(1.0282);">Frequency modulator</span>
<span class="t" style="left:1422.14px;top:750.80px;font-size:26.74px;line-height:26.74px;color:#17181c;transform:scaleX(1.0315);">Monitoring</span>
<svg style="left:2118.80px;top:746.70px;width:33.30px;height:32.90px;" viewBox="0 0 100 100" preserveAspectRatio="none"><defs><clipPath id="kc5"><circle cx="50" cy="50" r="50"/></clipPath><filter id="kb5"><feGaussianBlur stdDeviation="1.6"/></filter></defs><g clip-path="url(#kc5)"><g filter="url(#kb5)"><rect x="-10" y="-10" width="120" height="120" fill="#4fa8d3"/><ellipse cx="17" cy="36" rx="15" ry="17" fill="#d3d6d0"/><ellipse cx="85" cy="36" rx="14" ry="17" fill="#d3d6d0"/><ellipse cx="52" cy="54" rx="31" ry="30" fill="#a9aeae"/><path d="M22 100 Q26 76 50 78 Q76 76 82 100 Z" fill="#c3cdc2"/><ellipse cx="53" cy="72" rx="13" ry="7" fill="#eef0ee"/><ellipse cx="54" cy="53" rx="6.5" ry="9" fill="#3b4049"/><ellipse cx="38" cy="46" rx="4.5" ry="3" fill="#3b4049"/><ellipse cx="70" cy="45" rx="4.5" ry="3" fill="#3b4049"/></g></g></svg>
<span class="t" style="left:2159.64px;top:748.20px;font-size:27.18px;line-height:27.18px;color:#0a60ff;transform:scaleX(0.9820);">Rick Orry</span>
<div style="left:389.00px;top:404.80px;width:60.00px;height:60.00px;background:#4f9d2e;border-radius:50%;box-shadow:0.4px 1.8px 2.6px rgba(0,0,0,.72);"></div>
<span class="t" style="left:409.49px;top:415.60px;font-size:46.10px;line-height:46.10px;color:#fff;transform:scaleX(0.8565);font-weight:700;clip-path:inset(0 0 12.90px 0);">1</span>
<div style="left:1181.10px;top:361.80px;width:60.20px;height:60.20px;background:#4f9d2e;border-radius:50%;box-shadow:0.4px 1.8px 2.6px rgba(0,0,0,.72);"></div>
<span class="t" style="left:1200.63px;top:376.40px;font-size:36.34px;line-height:36.34px;color:#fff;transform:scaleX(1.0722);font-weight:700;">2</span>
</div>
</body></html>
